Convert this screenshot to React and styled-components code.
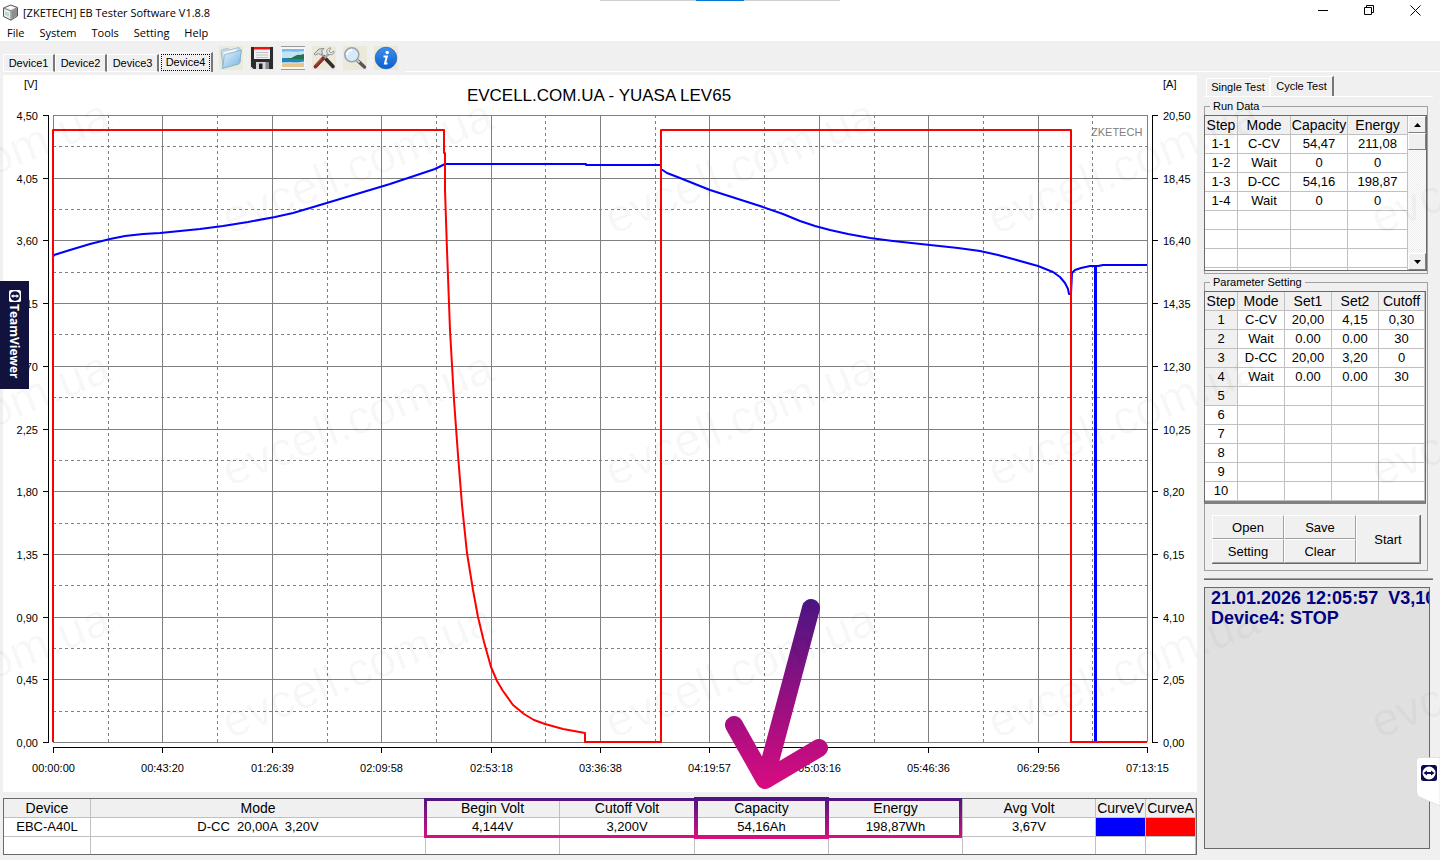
import { useState } from 'react';
import styled, { createGlobalStyle, css } from 'styled-components';

const GlobalStyle = createGlobalStyle`
  * {
    box-sizing: border-box;
  }
  body {
    margin: 0;
    background: #f0f0f0;
    color: #000;
    font-family: 'Liberation Sans', Arial, sans-serif;
    font-size: 13px;
  }
  button {
    font: inherit;
    color: inherit;
    margin: 0;
    padding: 0;
    border: 0;
    background: none;
  }
`;

const small = css`
  font-family: 'Liberation Sans', Arial, sans-serif;
  font-size: 11px;
`;

const Page = styled.div`
  position: relative;
  display: flex;
  flex-direction: column;
  min-height: 100vh;
  overflow: hidden;
`;

/* ---------- window frame ---------- */

const TitleBar = styled.header`
  display: flex;
  align-items: center;
  height: 24px;
  padding: 0 2px;
  background: #fff;
`;

const WindowTitle = styled.h1`
  flex: 1;
  margin: 0 0 0 4px;
  font-family: 'Open Sans', 'Segoe UI', sans-serif;
  font-size: 11px;
  font-weight: 400;
`;

const WindowButton = styled.button`
  display: grid;
  place-items: center;
  align-self: flex-start;
  width: 46px;
  height: 21px;
`;

const TopHandle = styled.div`
  position: absolute;
  top: 0;
  left: 50%;
  width: 240px;
  height: 1px;
  margin-left: -120px;
  padding: 0 96px;
  background: #d0d0d0;

  &::before {
    content: '';
    display: block;
    height: 1px;
    background: #0078d7;
  }
`;

const MenuBar = styled.nav`
  display: flex;
  gap: 15px;
  height: 17px;
  padding-left: 7px;
  background: #fff;
  font-family: 'Open Sans', 'Segoe UI', sans-serif;
  font-size: 11px;
  line-height: 17px;
`;

const ToolBar = styled.div`
  display: flex;
  align-items: flex-end;
  height: 34px;
  padding: 0 0 3px 3px;
`;

const TabStrip = styled.div`
  display: flex;
  align-items: flex-end;
`;

const Tab = styled.button`
  ${small}
  height: ${({ $active }) => ($active ? 20 : 18)}px;
  padding: 1px 2px;
  border-top: 1px solid #fff;
  border-left: 1px solid #fff;
  border-right: ${({ $flat }) => ($flat ? '1px solid #fff' : '2px solid #777')};
  white-space: nowrap;
  line-height: 15px;

  > span {
    display: block;
    outline: ${({ $focus }) => ($focus ? '1px dotted #000' : 'none')};
  }
`;

const DeviceTab = styled(Tab)`
  width: ${({ $active }) => ($active ? 54 : 52)}px;
  border-bottom: ${({ $active }) => ($active ? 0 : 1)}px solid #fff;
`;

const SideTab = styled(Tab)`
  width: 64px;
`;

const Tools = styled.div`
  display: flex;
  gap: 7px;
  padding: 0 0 2px 6px;
`;

const ToolRule = styled.div`
  flex: 1;
  margin-left: 7px;
  border-bottom: 1px solid #fff;
`;

const ToolButton = styled.button`
  width: 24px;
  height: 24px;

  svg {
    display: block;
  }
`;

/* ---------- body ---------- */

const Main = styled.main`
  display: flex;
  flex: 1;
  gap: 7px;
  padding: 0 7px 5px 3px;
`;

const Work = styled.section`
  position: relative;
  display: flex;
  flex: 1;
  flex-direction: column;
  gap: 6px;
  min-width: 0;
`;

const ChartSvg = styled.svg`
  display: block;
  width: 100%;
  height: auto;
  background: #fff;

  text {
    ${small}
  }
  .title {
    font-size: 17px;
  }
`;

const GridFrame = styled.div`
  display: flex;
  border: 1px solid #696969;
  background: #fff;
  height: ${({ $height }) => $height};
  overflow: hidden;
`;

const Grid = styled.table`
  flex: 1;
  align-self: flex-start;
  width: 100%;
  table-layout: fixed;
  border-collapse: separate;
  border-spacing: 0;

  th,
  td {
    height: 19px;
    padding: 0;
    overflow: hidden;
    border-right: 1px solid #c0c0c0;
    border-bottom: 1px solid #c0c0c0;
    line-height: 18px;
    text-align: center;
    white-space: pre;
  }
  th {
    background: #f0f0f0;
    font-size: 14px;
    font-weight: 400;
  }
`;

const StepCell = styled.td`
  background: ${({ $shaded }) => ($shaded ? '#f0f0f0' : '#fff')};
`;

const Swatch = styled.td`
  background: ${({ $color }) => $color};
`;

const Annotation = styled.svg`
  position: absolute;
  inset: 0;
  width: 100%;
  pointer-events: none;
`;

/* ---------- side panel ---------- */

const Side = styled.aside`
  display: flex;
  flex-direction: column;
  width: 229px;
  padding-bottom: 6px;
`;

const SideTabs = styled(TabStrip)`
  height: 22px;
  padding-left: 2px;
  margin-bottom: 3px;
  border-bottom: 1px solid #fff;
`;

const Group = styled.fieldset`
  width: 224px;
  min-width: 0;
  margin: 0 0 2px;
  padding: 3px 0 2px;
  border: 1px solid #a0a0a0;

  > legend {
    ${small}
    margin-left: 5px;
    padding: 0 3px;
    line-height: 12px;
  }
`;

const RunFrame = styled(GridFrame)`
  margin-left: -1px;
`;

const ParamFrame = styled(GridFrame)`
  margin: 0 1px 0 -1px;
  border-bottom: 3px solid #808080;
`;

const ScrollBar = styled.div`
  display: flex;
  flex-direction: column;
  width: 18px;
  background: repeating-conic-gradient(#fff 0 25%, #ececec 0 50%) 0 0 / 2px 2px;
`;

const raised = css`
  border: 1px solid;
  border-color: #fff #808080 #808080 #fff;
  background: #f0f0f0;
`;

const ScrollButton = styled.button`
  ${raised}
  display: grid;
  place-items: center;
  height: 17px;
`;

const ScrollThumb = styled.div`
  ${raised}
  height: 17px;
  margin-bottom: auto;
`;

const ButtonPad = styled.div`
  display: grid;
  grid-template-columns: 72px 72px 1fr;
  grid-template-rows: 24px 24px;
  margin: 11px 6px 4px 7px;
  border-right: 1px solid #696969;
  border-bottom: 1px solid #696969;
`;

const PadButton = styled.button`
  border: 1px solid;
  border-color: #fff #a0a0a0 #a0a0a0 #fff;
  grid-row: ${({ $tall }) => ($tall ? '1 / 3' : 'auto')};
  grid-column: ${({ $tall }) => ($tall ? 3 : 'auto')};
`;

const Rule = styled.hr`
  width: 100%;
  height: 2px;
  margin: 5px 0 7px;
  border: 0;
  border-top: 1px solid #a0a0a0;
  border-bottom: 1px solid #696969;
`;

const Status = styled.output`
  flex: 1;
  width: 226px;
  padding-left: 6px;
  overflow: hidden;
  border: 1px solid #696969;
  background: #e0e0e0;
  color: #000080;
  font-size: 18px;
  font-weight: 700;
  line-height: 20px;
  white-space: pre;
`;

/* ---------- overlays ---------- */

const Watermarks = styled.svg`
  position: absolute;
  inset: 0;
  width: 100%;
  height: 100%;
  pointer-events: none;
  fill: #000;
  fill-opacity: 0.04;
  font-size: 47px;
`;

const TeamViewerTab = styled.div`
  position: absolute;
  top: 281px;
  left: 0;
  display: flex;
  align-items: center;
  gap: 2px;
  width: 29px;
  height: 108px;
  padding-top: 9px;
  writing-mode: vertical-rl;
  background: #12123f;
  color: #fff;
  font-family: 'Open Sans', sans-serif;
  font-size: 12px;
  font-weight: 700;
`;

const TeamViewerHandle = styled.svg`
  position: absolute;
  top: 756px;
  right: 0;
`;

/* ---------- icons ---------- */

const AppIcon = () => (
  <svg width="17" height="17" viewBox="0 0 17 17">
    <path d="M1.500 4 8.500 1l7 2.500v8.500l-6.500 4.200-7.500-3.700z" fill="#e8eceb" stroke="#555" />
    <path d="M1.500 4 9 7l6.500-3.500M9 7v9" fill="none" stroke="#777" />
    <path d="M9.500 7.300 15 4.200v7.600l-5.500 3.500z" fill="#8b8f8f" />
    <path d="M3 7.500l4 1.500v3.500l-4-1.600z" fill="#b6dcc6" />
    <path d="M5 3.500l3.500-1.300 4 1.400L9 5z" fill="#fff" />
  </svg>
);

const FolderIcon = () => (
  <svg width="24" height="24" viewBox="0 0 24 24">
    <defs>
      <linearGradient id="folder" x1="0" y1="0" x2="1" y2="1">
        <stop offset="0" stopColor="#e2f3fc" />
        <stop offset="1" stopColor="#74b3e0" />
      </linearGradient>
    </defs>
    <path fill="#ece9d8" d="M0 0h24v24H0z" />
    <path d="M2 5 4 3.500l5-1L10.500 4 20 1.500 21.500 4v12L4 22z" fill="#c4dcec" stroke="#8fb0c6" strokeWidth=".7" />
    <path d="M4 6l14-3.500v14L5 20z" fill="#f7fbfe" stroke="#a9c4d6" strokeWidth=".5" />
    <path d="M5.500 8.500 22.500 4 20 18 3.500 22.500z" fill="url(#folder)" stroke="#71a5cc" strokeWidth=".7" />
  </svg>
);

const SaveIcon = () => (
  <svg width="24" height="24" viewBox="0 0 24 24">
    <path fill="#ece9d8" d="M0 0h24v24H0z" />
    <path d="M1 1h22v22H3.500L1 20.500z" fill="#2b2b2d" />
    <path d="M4 2h16v11H4z" fill="#f1f1f1" />
    <path d="M4 1h16v2.500H4z" fill="#f01010" />
    <path d="M6 6.500h12M6 9h12M6 11.500h12" stroke="#c4c4c4" />
    <path d="M6 16h13v7H6z" fill="#d5d7d9" />
    <path d="M9 17.500h3.500V23H9z" fill="#222" />
    <path d="M15.500 16H19v7h-3.500z" fill="#85898d" />
  </svg>
);

const PictureIcon = () => (
  <svg width="24" height="24" viewBox="0 0 24 24">
    <path fill="#f7f7f5" d="M0 0h24v24H0z" />
    <path d="M0 .5h24M0 23.500h24" stroke="#9a9a9a" />
    <path d="M1 3h22v9H1z" fill="#76bdec" />
    <path d="M1 6c6-2 10 1 22-1v7H1z" fill="#c2e4f7" />
    <path d="M1 12h22v5H1z" fill="#2384b8" />
    <path d="M6 13c2-2 4 0 6-2 3-1 4-3 7-2l4-1v5z" fill="#23744c" />
    <path d="M1 17c8-1 14 1 22-1v5H1z" fill="#e8c58c" />
    <path d="M1 17c8-1 14 1 22-1" stroke="#d9f1f5" fill="none" />
  </svg>
);

const ToolsIcon = () => (
  <svg width="24" height="24" viewBox="0 0 24 24">
    <path fill="#ece9d8" d="M0 0h24v24H0z" />
    <path d="M12 11l9 9.500" stroke="#2f2f33" strokeWidth="3.600" strokeLinecap="round" />
    <path d="M8.500 7l4.500 5" stroke="#9da2a6" strokeWidth="2" />
    <path d="M2 8l5-5 5-.5-2.500 2.500 1 2-2 2-2-1.500L3.500 9z" fill="#d9dde0" stroke="#70757a" strokeWidth=".8" />
    <path d="M11.500 12.500 18 7" stroke="#a8adb1" strokeWidth="2.600" />
    <path d="M22 5l-3 2-2-2 2-3c-3-.5-5 2-4 5 2 3 8 2 7-2z" fill="#e3e6e8" stroke="#83888c" strokeWidth=".8" />
    <path d="M11 12.500 3.500 20.500" stroke="#8e2929" strokeWidth="3.800" strokeLinecap="round" />
    <path d="M10 12.500 3 19.500" stroke="#cc6b62" strokeWidth=".8" />
  </svg>
);

const SearchIcon = () => (
  <svg width="24" height="24" viewBox="0 0 24 24">
    <path fill="#ece9d8" d="M0 0h24v24H0z" />
    <path d="M15 15l6.500 6" stroke="#55585c" strokeWidth="3.400" strokeLinecap="round" />
    <path d="M13.500 13.500l3 3" stroke="#c9cdd0" strokeWidth="2" />
    <circle cx="8.800" cy="8.800" r="7" fill="#d7eaf9" stroke="#9aa2ab" strokeWidth="1.500" />
    <path d="M4 9a5 5 0 0 1 5-5" stroke="#fff" strokeWidth="2" fill="none" />
  </svg>
);

const InfoIcon = () => (
  <svg width="24" height="24" viewBox="0 0 24 24">
    <defs>
      <linearGradient id="info" x1="0" y1="0" x2="0" y2="1">
        <stop offset="0" stopColor="#3f8fea" />
        <stop offset="1" stopColor="#0a5fd0" />
      </linearGradient>
    </defs>
    <path fill="#ece9d8" d="M0 0h24v24H0z" />
    <circle cx="12" cy="12" r="10.800" fill="url(#info)" stroke="#2268bd" strokeWidth=".8" />
    <circle cx="13.200" cy="6.500" r="1.700" fill="#fff" />
    <path d="M9.500 10.500h3.300L11 17.500h2.500" stroke="#fff" strokeWidth="2" fill="none" />
  </svg>
);

const TeamViewerIcon = ({ size, x, y, box, disc }) => (
  <svg width={size} height={size} x={x} y={y} viewBox="0 0 16 16">
    <rect width="16" height="16" rx="2.500" fill={box} />
    <circle cx="8" cy="8" r="6.500" fill={disc} />
    <path d="M2.500 8 6 5.500V7h4V5.500L13.500 8 10 10.500V9H6v1.500z" fill={box} />
  </svg>
);

/* ---------- data ---------- */

const MENU = ['File', 'System', 'Tools', 'Setting', 'Help'];
const DEVICES = ['Device1', 'Device2', 'Device3', 'Device4'];

const TOOLS = [
  ['Open', FolderIcon],
  ['Save', SaveIcon],
  ['Picture', PictureIcon],
  ['Options', ToolsIcon],
  ['Zoom', SearchIcon],
  ['Info', InfoIcon],
];

const VOLTS = ['4,50', '4,05', '3,60', '3,15', '2,70', '2,25', '1,80', '1,35', '0,90', '0,45', '0,00'];
const AMPS = ['20,50', '18,45', '16,40', '14,35', '12,30', '10,25', '8,20', '6,15', '4,10', '2,05', '0,00'];
const TIMES = [
  '00:00:00', '00:43:20', '01:26:39', '02:09:58', '02:53:18', '03:36:38',
  '04:19:57', '05:03:16', '05:46:36', '06:29:56', '07:13:15',
];

const VOLT_CURVE =
  '50,182 51,180 67,175 87,169 107,164 122,161 140,159 157,158 197,154 220,151 245,147 272,142 290,138 ' +
  '307,133 347,121 387,109 417,99 432,94 442,89 583,89 583,90 658,90 658,94 664,98 677,103 707,115 ' +
  '757,131 780,139 797,146 812,151 827,155 845,159 867,163 890,166 927,170 955,173 977,176 995,180 ' +
  '1010,184 1035,191 1050,197 1057,202 1062,208 1065,214 1066,219 1068,219 1069,198 1072,195 1078,193 ' +
  '1087,191 1095,191 1100,190 1144,190';

const AMP_CURVE =
  '50,667 50,55 441,55 441,78 442,78 442,115 444,175 447,255 451,325 455,380 459,430 464,478 470,515 ' +
  '475,542 481,567 488,592 494,606 500,616 510,630 521,639 531,645 542,649 560,654 582,658 582,667 ' +
  '658,667 658,55 1068,55 1068,667 1144,667';

const RUN_ROWS = [
  ['1-1', 'C-CV', '54,47', '211,08'],
  ['1-2', 'Wait', '0', '0'],
  ['1-3', 'D-CC', '54,16', '198,87'],
  ['1-4', 'Wait', '0', '0'],
  ['', '', '', ''],
  ['', '', '', ''],
  ['', '', '', ''],
  ['', '', '', ''],
];

const PARAM_ROWS = [
  ['1', 'C-CV', '20,00', '4,15', '0,30'],
  ['2', 'Wait', '0.00', '0.00', '30'],
  ['3', 'D-CC', '20,00', '3,20', '0'],
  ['4', 'Wait', '0.00', '0.00', '30'],
  ...['5', '6', '7', '8', '9', '10'].map(step => [step, '', '', '', '']),
];

const RESULT_COLUMNS = [
  ['Device', 87],
  ['Mode'],
  ['Begin Volt', 134],
  ['Cutoff Volt', 135],
  ['Capacity', 134],
  ['Energy', 134],
  ['Avg Volt', 133],
  ['CurveV', 50],
  ['CurveA', 50],
];
const RESULT = ['EBC-A40L', 'D-CC  20,00A  3,20V', '4,144V', '3,200V', '54,16Ah', '198,87Wh', '3,67V'];

/* ---------- parts ---------- */

const LEFT = 50;
const RIGHT = 1144;
const TOP = 40;
const BOTTOM = 667;
const column = i => Math.round(LEFT + ((RIGHT - LEFT) * i) / 20) + 0.5;
const line = i => Math.round(TOP + ((BOTTOM - TOP) * i) / 20) + 0.5;

const Chart = () => (
  <ChartSvg viewBox="0 0 1194 717" role="img" aria-label="Voltage and current over time">
    <g shapeRendering="crispEdges" stroke="#808080" fill="none">
      {Array.from({ length: 21 }, (_, i) => (
        <g key={i} strokeDasharray={i % 2 ? '3 3' : undefined}>
          <path d={`M${column(i)} ${TOP}V${BOTTOM}`} />
          <path d={`M${LEFT} ${line(i)}H${RIGHT}`} />
        </g>
      ))}
    </g>
    <g shapeRendering="crispEdges" stroke="#000" fill="none">
      <path d={`M45.500 ${TOP}V${BOTTOM + 1}M1149.500 ${TOP}V${BOTTOM + 1}M${LEFT} 672.500H${RIGHT + 1}`} />
      {VOLTS.map((volt, i) => (
        <path key={volt} d={`M40 ${line(i * 2)}h6M1149 ${line(i * 2)}h6M${column(i * 2)} 672v6`} />
      ))}
    </g>
    <text className="title" x="596" y="26" textAnchor="middle">EVCELL.COM.UA - YUASA LEV65</text>
    <text x="21" y="13">[V]</text>
    <text x="1160" y="13">[A]</text>
    <text x="1088" y="61" fill="#808080">ZKETECH</text>
    {VOLTS.map((volt, i) => (
      <text key={volt} x="35" y={line(i * 2) + 4} textAnchor="end">{volt}</text>
    ))}
    {AMPS.map((amp, i) => (
      <text key={amp} x="1160" y={line(i * 2) + 4}>{amp}</text>
    ))}
    {TIMES.map((time, i) => (
      <text key={time} x={column(i * 2)} y="697" textAnchor="middle">{time}</text>
    ))}
    <g fill="none" strokeWidth="2" strokeLinejoin="round">
      <polyline points={VOLT_CURVE} stroke="#00f" />
      <path d="M1092.500 191V667" stroke="#00f" strokeWidth="3" />
      <polyline points={AMP_CURVE} stroke="#f00" />
    </g>
  </ChartSvg>
);

const Results = () => (
  <GridFrame $height="57px">
    <Grid>
      <colgroup>
        {RESULT_COLUMNS.map(([name, width]) => <col key={name} width={width} />)}
      </colgroup>
      <thead>
        <tr>{RESULT_COLUMNS.map(([name]) => <th key={name}>{name}</th>)}</tr>
      </thead>
      <tbody>
        <tr>
          {RESULT.map(value => <td key={value}>{value}</td>)}
          <Swatch $color="#00f" />
          <Swatch $color="#f00" />
        </tr>
        <tr>{RESULT_COLUMNS.map(([name]) => <td key={name} />)}</tr>
      </tbody>
    </Grid>
  </GridFrame>
);

const Highlight = () => (
  <Annotation viewBox="0 0 1194 781">
    <defs>
      <linearGradient id="arrow" gradientUnits="userSpaceOnUse" x1="0" y1="525" x2="0" y2="714">
        <stop offset="0" stopColor="#4b1583" />
        <stop offset="1" stopColor="#d90b80" />
      </linearGradient>
      <linearGradient id="frame" gradientUnits="userSpaceOnUse" x1="0" y1="723" x2="0" y2="763">
        <stop offset="0" stopColor="#4b1583" />
        <stop offset="1" stopColor="#d8107f" />
      </linearGradient>
    </defs>
    <g fill="none" stroke="url(#frame)">
      <path d="M422.500 724.500h535v37h-535z" strokeWidth="3" />
      <path d="M693 724h131v38h-131z" strokeWidth="4" />
    </g>
    <path
      d="M808 533 762 705M731 650l31 55 54-32"
      fill="none"
      stroke="url(#arrow)"
      strokeWidth="18"
      strokeLinecap="round"
      strokeLinejoin="round"
    />
  </Annotation>
);

const RunData = () => (
  <Group>
    <legend>Run Data</legend>
    <RunFrame $height="156px">
      <Grid>
        <colgroup>
          <col width="33" />
          <col width="53" />
          <col width="57" />
          <col />
        </colgroup>
        <thead>
          <tr>
            <th>Step</th>
            <th>Mode</th>
            <th>Capacity</th>
            <th>Energy</th>
          </tr>
        </thead>
        <tbody>
          {RUN_ROWS.map((row, i) => (
            <tr key={i}>{row.map((value, j) => <td key={j}>{value}</td>)}</tr>
          ))}
        </tbody>
      </Grid>
      <ScrollBar>
        <ScrollButton aria-label="Scroll up">
          <svg width="7" height="4"><path d="M0 4 3.500 0 7 4z" /></svg>
        </ScrollButton>
        <ScrollThumb />
        <ScrollButton aria-label="Scroll down">
          <svg width="7" height="4"><path d="M0 0h7L3.500 4z" /></svg>
        </ScrollButton>
      </ScrollBar>
    </RunFrame>
  </Group>
);

const Parameters = () => (
  <Group>
    <legend>Parameter Setting</legend>
    <ParamFrame $height="213px">
      <Grid>
        <colgroup>
          <col width="33" />
          <col width="47" />
          <col width="47" />
          <col width="47" />
          <col />
        </colgroup>
        <thead>
          <tr>
            <th>Step</th>
            <th>Mode</th>
            <th>Set1</th>
            <th>Set2</th>
            <th>Cutoff</th>
          </tr>
        </thead>
        <tbody>
          {PARAM_ROWS.map(([step, ...values]) => (
            <tr key={step}>
              <StepCell $shaded={step <= 5}>{step}</StepCell>
              {values.map((value, i) => <td key={i}>{value}</td>)}
            </tr>
          ))}
        </tbody>
      </Grid>
    </ParamFrame>
    <ButtonPad>
      <PadButton>Open</PadButton>
      <PadButton>Save</PadButton>
      <PadButton $tall>Start</PadButton>
      <PadButton>Setting</PadButton>
      <PadButton>Clear</PadButton>
    </ButtonPad>
  </Group>
);

export default function App() {
  const [device, setDevice] = useState('Device4');
  const [test, setTest] = useState('Cycle Test');

  return (
    <Page>
      <GlobalStyle />
      <TitleBar>
        <AppIcon />
        <WindowTitle>[ZKETECH] EB Tester Software V1.8.8</WindowTitle>
        <WindowButton aria-label="Minimize">
          <svg width="11" height="11"><path d="M0 5.500h10" stroke="#000" /></svg>
        </WindowButton>
        <WindowButton aria-label="Restore">
          <svg width="11" height="11" fill="none" stroke="#000">
            <path d="M.5 2.500h7v7h-7zM2.500 2.500v-2h7v7h-2" />
          </svg>
        </WindowButton>
        <WindowButton aria-label="Close">
          <svg width="11" height="11"><path d="M.5.5l10 10M10.500.5l-10 10" stroke="#000" /></svg>
        </WindowButton>
      </TitleBar>
      <TopHandle />
      <MenuBar>
        {MENU.map(item => <button key={item}>{item}</button>)}
      </MenuBar>
      <ToolBar>
        <TabStrip role="tablist">
          {DEVICES.map(name => (
            <DeviceTab
              key={name}
              role="tab"
              aria-selected={name === device}
              $active={name === device}
              $focus={name === device}
              onClick={() => setDevice(name)}
            >
              <span>{name}</span>
            </DeviceTab>
          ))}
        </TabStrip>
        <Tools>
          {TOOLS.map(([name, Icon]) => (
            <ToolButton key={name} aria-label={name}><Icon /></ToolButton>
          ))}
        </Tools>
        <ToolRule />
      </ToolBar>
      <Main>
        <Work>
          <Chart />
          <Results />
          <Highlight />
        </Work>
        <Side>
          <SideTabs role="tablist">
            {['Single Test', 'Cycle Test'].map(name => (
              <SideTab
                key={name}
                role="tab"
                aria-selected={name === test}
                $active={name === test}
                $flat={name !== test}
                onClick={() => setTest(name)}
              >
                <span>{name}</span>
              </SideTab>
            ))}
          </SideTabs>
          <RunData />
          <Parameters />
          <Rule />
          <Status>{'21.01.2026 12:05:57  V3,10\nDevice4: STOP'}</Status>
        </Side>
      </Main>
      <TeamViewerTab>
        <TeamViewerIcon size={12} box="#fff" disc="#12123f" />
        TeamViewer
      </TeamViewerTab>
      <TeamViewerHandle width="24" height="50">
        <path d="M24 1.500H4Q.5 1.500.5 5v31q0 3 3 5L24 50z" fill="#fff" stroke="#ccc" strokeWidth=".5" />
        <TeamViewerIcon size={16} x={5} y={9} box="#0b0b4f" disc="#fff" />
      </TeamViewerHandle>
      <Watermarks aria-hidden="true">
        {[235, 487, 739].map(y =>
          [-153, 230, 613, 996, 1379].map(x => (
            <text key={`${x} ${y}`} transform={`translate(${x} ${y}) rotate(-22)`}>evcell.com.ua</text>
          ))
        )}
      </Watermarks>
    </Page>
  );
}
